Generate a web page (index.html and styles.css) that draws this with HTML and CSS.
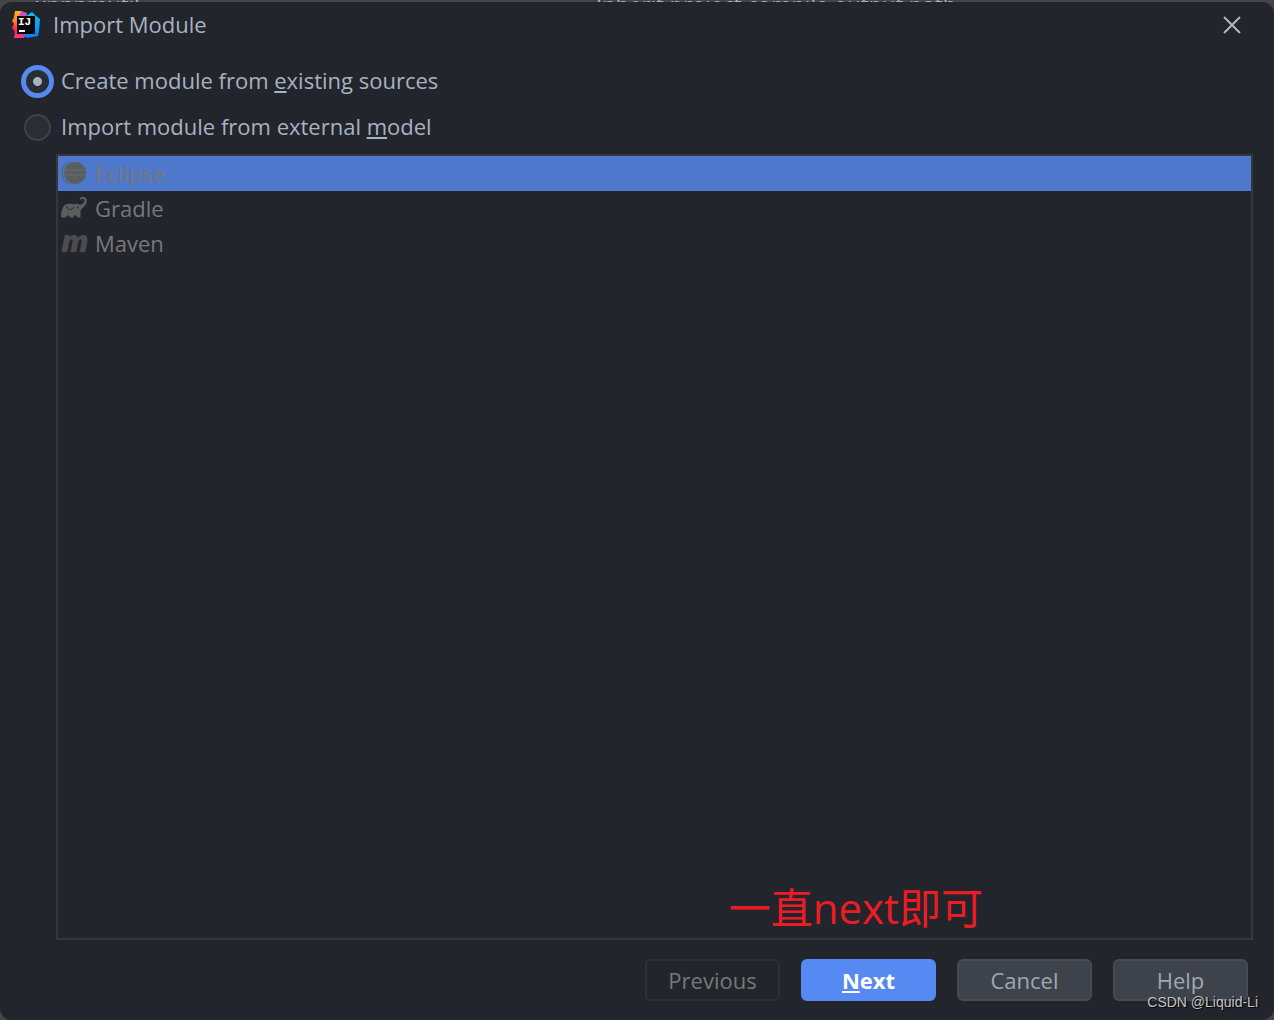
FILE: index.html
```html
<!DOCTYPE html>
<html lang="en">
<head>
  <meta charset="UTF-8" />
  <meta name="viewport" content="width=device-width, initial-scale=1.0"/>
  <title>Import Module</title>
  <link rel="stylesheet" href="styles.css">
</head>
<body>
  <div class="backdrop" aria-hidden="true">
    <span>xnnnmutil</span>
    <span>Inherit project compile output path</span>
  </div>

  <div class="dialog" role="dialog" aria-labelledby="title">
    <header class="titlebar">
      <svg class="logo" viewBox="0 0 28 28">
        <defs>
          <linearGradient id="warm" x1="0" y1="0" x2="0" y2="1">
            <stop offset="0" stop-color="#fdb60d"/>
            <stop offset="0.4" stop-color="#fc801d"/>
            <stop offset="0.65" stop-color="#fe2857"/>
            <stop offset="1" stop-color="#ff318c"/>
          </linearGradient>
          <linearGradient id="cool" x1="0" y1="0" x2="0" y2="1">
            <stop offset="0" stop-color="#07c3f2"/>
            <stop offset="1" stop-color="#087cfa"/>
          </linearGradient>
        </defs>
        <path fill="url(#warm)" d="M3 0l7 0 3 6-3 15 5 2-3 4-10 0 1-6-3-4 2-4-2-3 2-4z"/>
        <path fill="#c757bc" d="M9 0l6 2-1 6-7-3z"/>
        <path fill="url(#cool)" d="M14 5l6-4 4 4 4 3-1 12-1 5-11 2-4-4z"/>
        <path fill="#0b0608" d="M5 5h18v18H5z"/>
        <text class="mark" x="6" y="14">IJ</text>
        <path fill="#fff" d="M7 19h6v2H7z"/>
      </svg>
      <h1 id="title">Import Module</h1>
      <button class="close" aria-label="Close">
        <svg viewBox="0 0 18 18"><path d="M1 1l16 16M17 1L1 17"/></svg>
      </button>
    </header>

    <main class="content">
      <div class="choice">
        <input type="radio" name="source" id="existing" checked>
        <label for="existing">Create module from <u>e</u>xisting sources</label>
      </div>
      <div class="choice">
        <input type="radio" name="source" id="external">
        <label for="external">Import module from external <u>m</u>odel</label>
      </div>

      <div class="models">
        <ul role="listbox" aria-label="External model" aria-disabled="true">
          <li class="selected" role="option" aria-selected="true">
            <svg viewBox="0 0 26 26">
              <path class="rim" d="M8 2Q1 6 1 13t7 11"/>
              <circle cx="14" cy="13" r="11"/>
              <path class="line" d="M3 10h22M3 15h22"/>
            </svg>
            Eclipse
          </li>
          <li role="option" aria-selected="false">
            <svg viewBox="0 0 26 26">
              <path d="M0 22.500C0 15 2 10 6 9c4-1 6 1 8 0 3-1 5 2 7 0 2-1 3-3 2-4.500-1-1.500-2.500-.5-3 .5l-1.500-1.500C20 1 24 1 25.500 4c1 4-1 7-4 9-2 1.500-2 3-2 5v4.500h-3.500c0-3-3.500-3-3.500 0H9c0-3-3.500-3-3.500 0z"/>
              <path class="ear" d="M6 11c0 4 4 5 7 1M16 12l2 1"/>
            </svg>
            Gradle
          </li>
          <li role="option" aria-selected="false">
            <svg class="maven" viewBox="0 0 26 26">
              <text x="0" y="22">m</text>
            </svg>
            Maven
          </li>
        </ul>
        <p class="note" lang="zh-CN">一直next即可</p>
      </div>
    </main>

    <footer class="buttons">
      <button disabled>Previous</button>
      <button class="primary"><u>N</u>ext</button>
      <button>Cancel</button>
      <button>Help</button>
    </footer>
    <span class="watermark">CSDN @Liquid-Li</span>
  </div>
</body>
</html>
```

FILE: styles.css
```css
* {
  box-sizing: border-box;
}

body {
  margin: 0;
  min-height: 100vh;
  display: flex;
  flex-direction: column;
  background: #434548;
  color: #a9b2c0;
  font-family: "Open Sans", "Noto Sans CJK SC", sans-serif;
  font-size: 22px;
  line-height: 30px;
}

/* sliver of the window behind the dialog */
.backdrop {
  height: 2px;
  overflow: hidden;
  display: grid;
  grid-template-columns: 561px 1fr;
  padding-left: 35px;
  line-height: 8px;
  white-space: nowrap;
}

.dialog {
  position: relative;
  flex: 1;
  display: flex;
  flex-direction: column;
  background: #22252c;
  border-radius: 12px;
}

.titlebar {
  display: flex;
  align-items: center;
  gap: 13px;
  height: 46px;
  padding: 0 32px 0 12px;
}

.logo {
  width: 28px;
  height: 28px;
}

.mark {
  fill: #fff;
  font: bold 11px "Liberation Mono", monospace;
}

h1 {
  flex: 1;
  margin: 0;
  padding-bottom: 2px;
  font-size: inherit;
  font-weight: normal;
}

.close {
  padding: 0;
  border: none;
  background: none;
}

.close svg {
  display: block;
  width: 20px;
  height: 18px;
  fill: none;
  stroke: #b5b6b9;
  stroke-width: 2;
}

.content {
  flex: 1;
  display: flex;
  flex-direction: column;
  padding: 10px 21px 0 24px;
}

.choice {
  display: flex;
  align-items: center;
  gap: 10px;
  height: 46px;
}

.choice label {
  padding-bottom: 2px;
}

.choice input {
  appearance: none;
  width: 27px;
  height: 27px;
  margin: 0;
  border: 2px solid #3e434c;
  border-radius: 50%;
  background: #292d34;
}

.choice input:checked {
  width: 33px;
  height: 33px;
  margin: 0 -3px;
  border: 5px solid #568af2;
  background: radial-gradient(circle, #a9b2c0 4px, #292d34 5px);
}

u {
  text-underline-offset: 2px;
  text-decoration-thickness: 2px;
  text-decoration-skip-ink: none;
}

.models {
  position: relative;
  flex: 1;
  margin: 4px 0 0 32px;
  border: 2px solid #333740;
}

.models ul {
  margin: 0;
  padding: 0;
  list-style: none;
}

.models li {
  display: flex;
  align-items: center;
  gap: 8px;
  height: 35px;
  padding: 0 0 2px 3px;
  color: #787878;
}

.models li.selected {
  background: #4d78cc;
}

.models svg {
  width: 26px;
  height: 26px;
  fill: #5c5d5f;
}

.models .maven {
  overflow: visible;
  fill: #4b4c4f;
  font: italic 800 30px "Open Sans", sans-serif;
}

.models .rim {
  fill: none;
  stroke: #5c5d5f;
}

.models .line {
  fill: none;
  stroke: #636c7c;
}

.models .ear {
  fill: none;
  stroke: #22252c;
}

.note {
  position: absolute;
  right: 268px;
  bottom: 0;
  margin: 0;
  color: #ed1c24;
  font-size: 42px;
  line-height: 60px;
}

.buttons {
  display: flex;
  justify-content: flex-end;
  gap: 21px;
  padding: 19px 26px;
}

.buttons button {
  width: 135px;
  height: 42px;
  padding: 0;
  border: 2px solid #464b55;
  border-radius: 6px;
  background: #3d424b;
  color: #a0a7b4;
  font: inherit;
}

.buttons button:disabled {
  border-color: #2d3037;
  background: none;
  color: #787878;
}

.buttons .primary {
  border-color: #568af2;
  background: #568af2;
  color: #fff;
  font-weight: bold;
}

.watermark {
  position: absolute;
  right: 16px;
  bottom: 8px;
  color: #c4c5c8;
  font-family: "Liberation Sans", sans-serif;
  font-size: 14px;
  line-height: 20px;
  text-shadow: 1px 1px 1px #000;
}
```
